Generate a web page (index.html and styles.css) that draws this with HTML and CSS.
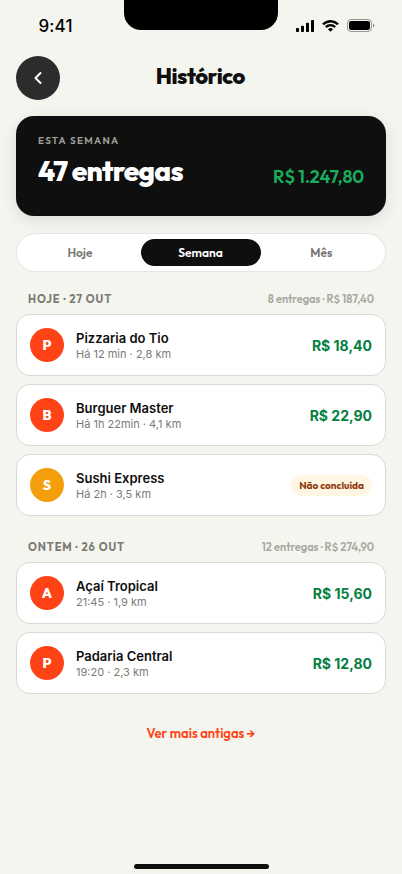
FILE: index.html
```html
<!DOCTYPE html>
<html lang="pt-BR">
<head>
<meta charset="utf-8">
<meta name="viewport" content="width=device-width, initial-scale=1">
<title>Histórico</title>
<link rel="stylesheet" href="styles.css">
</head>
<body>
<div class="screen">
  <header class="status">
    <span class="time">9:41</span>
    <span class="notch"></span>
    <span class="status-icons">
      <svg width="18" height="12" viewBox="0 0 18 12"><rect x="0" y="8" width="3" height="4" rx=".8"/><rect x="5" y="5.8" width="3" height="6.2" rx=".8"/><rect x="10" y="2.8" width="3" height="9.2" rx=".8"/><rect x="15" y="0" width="3" height="12" rx=".8"/></svg>
      <svg width="17" height="12" viewBox="0 0 17 12"><path d="M8.500 2.400c2.400 0 4.700.9 6.400 2.600.2.200.3.200.5 0l1.200-1.200c.2-.2.200-.4 0-.6A11.800 11.800 0 0 0 .4 3.200c-.2.200-.2.400 0 .6L1.600 5c.2.200.3.200.5 0a9.200 9.200 0 0 1 6.400-2.600Zm0 4c1.300 0 2.600.5 3.500 1.400.2.200.4.200.6 0l1.200-1.200c.2-.2.200-.4 0-.6a7.700 7.700 0 0 0-10.600 0c-.2.200-.2.400 0 .6l1.200 1.200c.2.200.4.200.6 0 .9-.9 2.200-1.400 3.500-1.400Zm2.300 2.600c.2.200.2.400 0 .6l-2 2c-.2.200-.4.200-.6 0l-2-2c-.2-.2-.2-.4 0-.6a3.600 3.600 0 0 1 4.600 0Z"/></svg>
      <svg width="28" height="13" viewBox="0 0 28 13"><rect x=".5" y=".5" width="24" height="12" rx="3.600" fill="none" stroke="#000" stroke-opacity=".38"/><rect x="2" y="2" width="21" height="9" rx="2.200"/><path d="M26 4.500v4c.8-.3 1.300-1.100 1.300-2s-.5-1.700-1.300-2Z" fill-opacity=".45"/></svg>
    </span>
  </header>

  <nav class="topbar">
    <button class="back" aria-label="Voltar"><svg width="10" height="14" viewBox="0 0 10 14"><path d="M7.500 2 2.500 7l5 5"/></svg></button>
    <h1>Histórico</h1>
  </nav>

  <section class="summary">
    <p class="label">ESTA SEMANA</p>
    <div class="totals"><strong>47 entregas</strong><span>R$ 1.247,80</span></div>
  </section>

  <div class="tabs"><span>Hoje</span><span class="active">Semana</span><span>Mês</span></div>

  <section class="group">
    <div class="group-head"><h2>HOJE · 27 OUT</h2><span class="meta">8 entregas · R$ 187,40</span></div>
    <article class="row"><span class="avatar">P</span><div class="info"><h3>Pizzaria do Tio</h3><p>Há 12 min · 2,8 km</p></div><b class="price">R$ 18,40</b></article>
    <article class="row"><span class="avatar">B</span><div class="info"><h3>Burguer Master</h3><p>Há 1h 22min · 4,1 km</p></div><b class="price">R$ 22,90</b></article>
    <article class="row"><span class="avatar amber">S</span><div class="info"><h3>Sushi Express</h3><p>Há 2h · 3,5 km</p></div><span class="badge">Não concluída</span></article>
  </section>

  <section class="group">
    <div class="group-head"><h2>ONTEM · 26 OUT</h2><span class="meta">12 entregas · R$ 274,90</span></div>
    <article class="row"><span class="avatar">A</span><div class="info"><h3>Açaí Tropical</h3><p>21:45 · 1,9 km</p></div><b class="price">R$ 15,60</b></article>
    <article class="row"><span class="avatar">P</span><div class="info"><h3>Padaria Central</h3><p>19:20 · 2,3 km</p></div><b class="price">R$ 12,80</b></article>
  </section>

  <a class="more">Ver mais antigas →</a>
  <div class="home"></div>
</div>
</body>
</html>
```
FILE: styles.css
```css
* { box-sizing: border-box; margin: 0; padding: 0; }
body { background: #f4f5ee; font-family: Inter, "Liberation Sans", sans-serif; color: #0f0f0f; }
.screen { width: 402px; height: 874px; padding: 0 16px 5px; display: flex; flex-direction: column; overflow: hidden; }
h1, h2, .label, .totals, .tabs, .meta, .badge, .more, .avatar { font-family: Outfit, Lato, "Open Sans", sans-serif; }

.status { height: 56px; display: grid; grid-template-columns: 108px 154px 108px; flex: none; }
.time { padding: 16px 0 0 22.500px; font-size: 17px; line-height: 20px; font-weight: 500; letter-spacing: .1px; color: #000; }
.notch { height: 30px; background: #000; border-radius: 0 0 17px 17px; box-shadow: 0 -29px 0 .5px #000; }
.status-icons { display: flex; align-items: center; gap: 8px; height: 13px; margin: 19px 0 0 18px; }
.status-icons svg { flex: none; }

.topbar { height: 44px; display: grid; grid-template-columns: 44px 1fr 44px; flex: none; }
.back { width: 44px; height: 44px; border: 0; border-radius: 50%; background: #2c2c2c; display: flex; align-items: center; justify-content: center; }
.back svg { fill: none; stroke: #fff; stroke-width: 2; stroke-linecap: round; stroke-linejoin: round; }
h1 { text-align: center; font-size: 22px; line-height: 40px; font-weight: 850; letter-spacing: -.5px; padding-right: 1.500px; }

.summary { flex: none; height: 100px; margin-top: 16px; padding: 18px 22px; border-radius: 18px; background: #0f0f0f; box-shadow: 0 4px 16px rgba(15,15,15,.1); }
.label { font-size: 10px; line-height: 13px; font-weight: 600; letter-spacing: 1.300px; color: #a1a19a; }
.totals { display: flex; justify-content: space-between; align-items: flex-end; height: 42px; white-space: nowrap; }
.totals strong { font-size: 28px; line-height: 34px; font-weight: 850; letter-spacing: -.75px; color: #fff; margin-bottom: 1px; }
.totals span { font-size: 18px; line-height: 24px; font-weight: 600; letter-spacing: -.18px; color: #18ae5b; }

.tabs { flex: none; height: 39px; margin-top: 16.500px; padding: 5px 3px; border: 1px solid #e7e7e1; border-radius: 20px; background: #fff; display: grid; grid-template-columns: repeat(3, 1fr); font-size: 12px; line-height: 27px; font-weight: 600; text-align: center; color: #74746e; }
.tabs span { padding-right: .8px; }
.tabs .active { background: #0f0f0f; color: #fff; border-radius: 14px; }

.group { display: flex; flex-direction: column; gap: 8px; margin-top: 20.500px; flex: none; }
.group + .group { margin-top: 24px; }
.group-head { height: 14px; display: flex; justify-content: space-between; padding: 0 12px; line-height: 14px; white-space: nowrap; }
h2 { font-size: 11px; line-height: 14px; font-weight: 700; letter-spacing: .88px; color: #7b7b74; }
.meta { font-size: 11px; font-weight: 600; color: #a8a8a1; }
.row { height: 62px; border: 1px solid #d9d9d5; border-radius: 14px; background: #fff; display: flex; align-items: center; padding: 0 13px; gap: 12px; }
.avatar { width: 34px; height: 34px; border-radius: 50%; background: #ff4316; color: #fff; font-size: 14px; line-height: 34px; font-weight: 800; text-align: center; }
.avatar.amber { background: #f59e0b; }
.info { flex: 1; padding-top: 1px; }
h3 { font-size: 13px; line-height: 16px; font-weight: 600; }
.info p { font-size: 11px; line-height: 14px; margin-top: 1.500px; color: #7b7b75; }
.price { font-size: 14px; line-height: 18px; font-weight: 700; color: #05803f; padding-top: 1px; }
.badge { height: 21px; padding: 0 8px; border-radius: 11px; background: #fff6e3; color: #8f3b0c; font-size: 10px; line-height: 21px; font-weight: 700; }

.more { align-self: center; margin-top: 30px; font-size: 13px; line-height: 18px; font-weight: 600; color: #ff4316; }
.home { align-self: center; margin-top: auto; width: 135px; height: 5px; border-radius: 3px; background: #0f0f0f; }
```
